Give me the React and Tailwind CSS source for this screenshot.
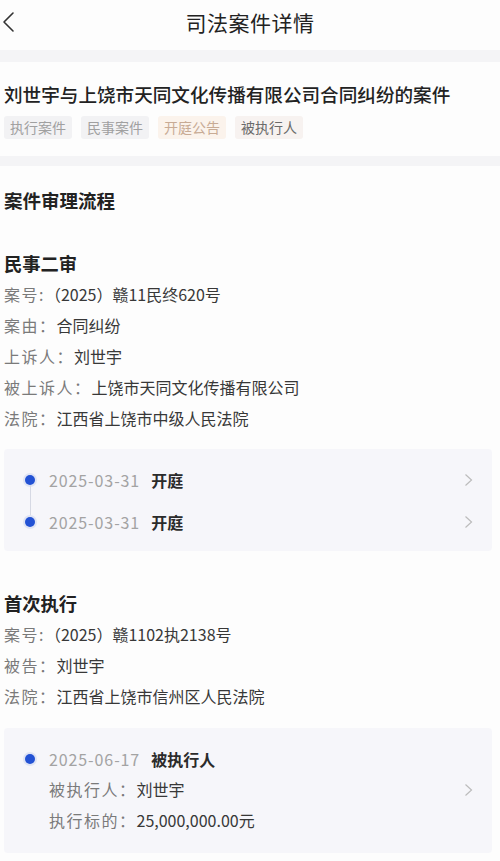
import { ChevronLeft, ChevronRight } from 'lucide-react';

const Row = ({ label, value, labelCls = '' }) => (
  <div className="flex leading-[31px] text-[16px]">
    <span className={`text-[#7a7a7a] tracking-[1.5px] ${labelCls}`}>{label}</span>
    <span className="text-[#383838]">{value}</span>
  </div>
);

const Dot = () => (
  <span className="block w-[10px] h-[10px] rounded-full bg-[#2352d4] ring-[2px] ring-[#dfe4f4] shrink-0" />
);

const Chevron = () => (
  <svg width="9" height="14" viewBox="0 0 9 14" className="shrink-0">
    <polyline points="1.5,1.5 7.5,7 1.5,12.5" fill="none" stroke="#bcbcbc" strokeWidth="1.2" />
  </svg>
);

const TimelineItem = ({ date, title, first, last }) => (
  <div className="flex items-stretch h-[42px] pr-[19px]">
    <div className="w-[10px] ml-[21px] flex flex-col items-center">
      <div className={`flex-1 w-px ${first ? '' : 'bg-[#d6d9e4]'}`} />
      <Dot />
      <div className={`flex-1 w-px ${last ? '' : 'bg-[#d6d9e4]'}`} />
    </div>
    <div className="flex-1 flex items-center ml-[14px]">
      <span className="text-[16px] text-[#a3a3a3] tracking-[0.9px]">{date}</span>
      <span className="ml-[11px] text-[16px] font-semibold text-[#2b2b2b]">{title}</span>
    </div>
    <div className="flex items-center">
      <Chevron />
    </div>
  </div>
);

const Tag = ({ children, cls }) => (
  <span className={`h-[23px] px-[6px] flex items-center rounded-[3px] text-[14px] ${cls}`}>{children}</span>
);

export default function App() {
  return (
    <div className="w-[500px] min-h-[861px] bg-[#fdfdfd] font-['Noto_Sans_CJK_SC',sans-serif]">
      {/* header */}
      <div className="h-[50px] relative flex items-center justify-center pb-[5px]">
        <svg width="16" height="24" viewBox="0 0 16 24" className="absolute left-[1px] top-[10px]">
          <polyline points="12,3 3,12 12,21" fill="none" stroke="#333" strokeWidth="1.6" strokeLinecap="round" strokeLinejoin="round" />
        </svg>
        <h1 className="text-[21px] text-[#222] font-normal tracking-[0.5px]">司法案件详情</h1>
      </div>
      <div className="h-[12px] bg-[#f4f4f6]" />

      {/* case summary */}
      <div className="px-[4px] pt-[20px] pb-[17px]">
        <h2 className="text-[18.6px] leading-[24px] font-medium text-[#222]">
          刘世宇与上饶市天同文化传播有限公司合同纠纷的案件
        </h2>
        <div className="mt-[10px] flex gap-[9px]">
          <Tag cls="bg-[#f2f2f4] text-[#a0a0a0]">执行案件</Tag>
          <Tag cls="bg-[#f2f2f4] text-[#a0a0a0]">民事案件</Tag>
          <Tag cls="bg-[#fbf3ec] text-[#c8ab95]">开庭公告</Tag>
          <Tag cls="bg-[#f7f2f0] text-[#6a6a6a]">被执行人</Tag>
        </div>
      </div>
      <div className="h-[10px] bg-[#f4f4f6]" />

      {/* process */}
      <div className="px-[4px] pt-[22px] pb-[10px]">
        <h3 className="text-[18.5px] leading-[24px] font-semibold text-[#222]">案件审理流程</h3>

        <h4 className="mt-[39px] text-[18.3px] leading-[24px] font-semibold text-[#222]">民事二审</h4>
        <div className="mt-[4px]">
          <Row label="案号:" value="（2025）赣11民终620号" />
          <Row label="案由：" value="合同纠纷" />
          <Row label="上诉人：" value="刘世宇" />
          <Row label="被上诉人：" value="上饶市天同文化传播有限公司" />
          <Row label="法院：" value="江西省上饶市中级人民法院" />
        </div>

        <div className="mt-[15px] mr-[4px] bg-[#f6f6fa] rounded-[4px] pt-[10px] pb-[8px]">
          <TimelineItem date="2025-03-31" title="开庭" first />
          <TimelineItem date="2025-03-31" title="开庭" last />
        </div>

        <h4 className="mt-[40px] text-[18.3px] leading-[24px] font-semibold text-[#222]">首次执行</h4>
        <div className="mt-[4px]">
          <Row label="案号:" value="（2025）赣1102执2138号" />
          <Row label="被告：" value="刘世宇" />
          <Row label="法院：" value="江西省上饶市信州区人民法院" />
        </div>

        <div className="mt-[16px] mr-[4px] bg-[#f6f6fa] rounded-[4px] pt-[15px] pb-[17px] pr-[19px]">
          <div className="flex items-center h-[31px]">
            <div className="ml-[21px]">
              <Dot />
            </div>
            <span className="ml-[14px] text-[16px] text-[#a3a3a3] tracking-[0.9px]">2025-06-17</span>
            <span className="ml-[11px] text-[16px] font-semibold text-[#2b2b2b]">被执行人</span>
          </div>
          <div className="flex items-center justify-between pl-[45px]">
            <Row label="被执行人：" value="刘世宇" />
            <Chevron />
          </div>
          <div className="pl-[45px]">
            <Row label="执行标的：" value="25,000,000.00元" />
          </div>
        </div>
      </div>
    </div>
  );
}
